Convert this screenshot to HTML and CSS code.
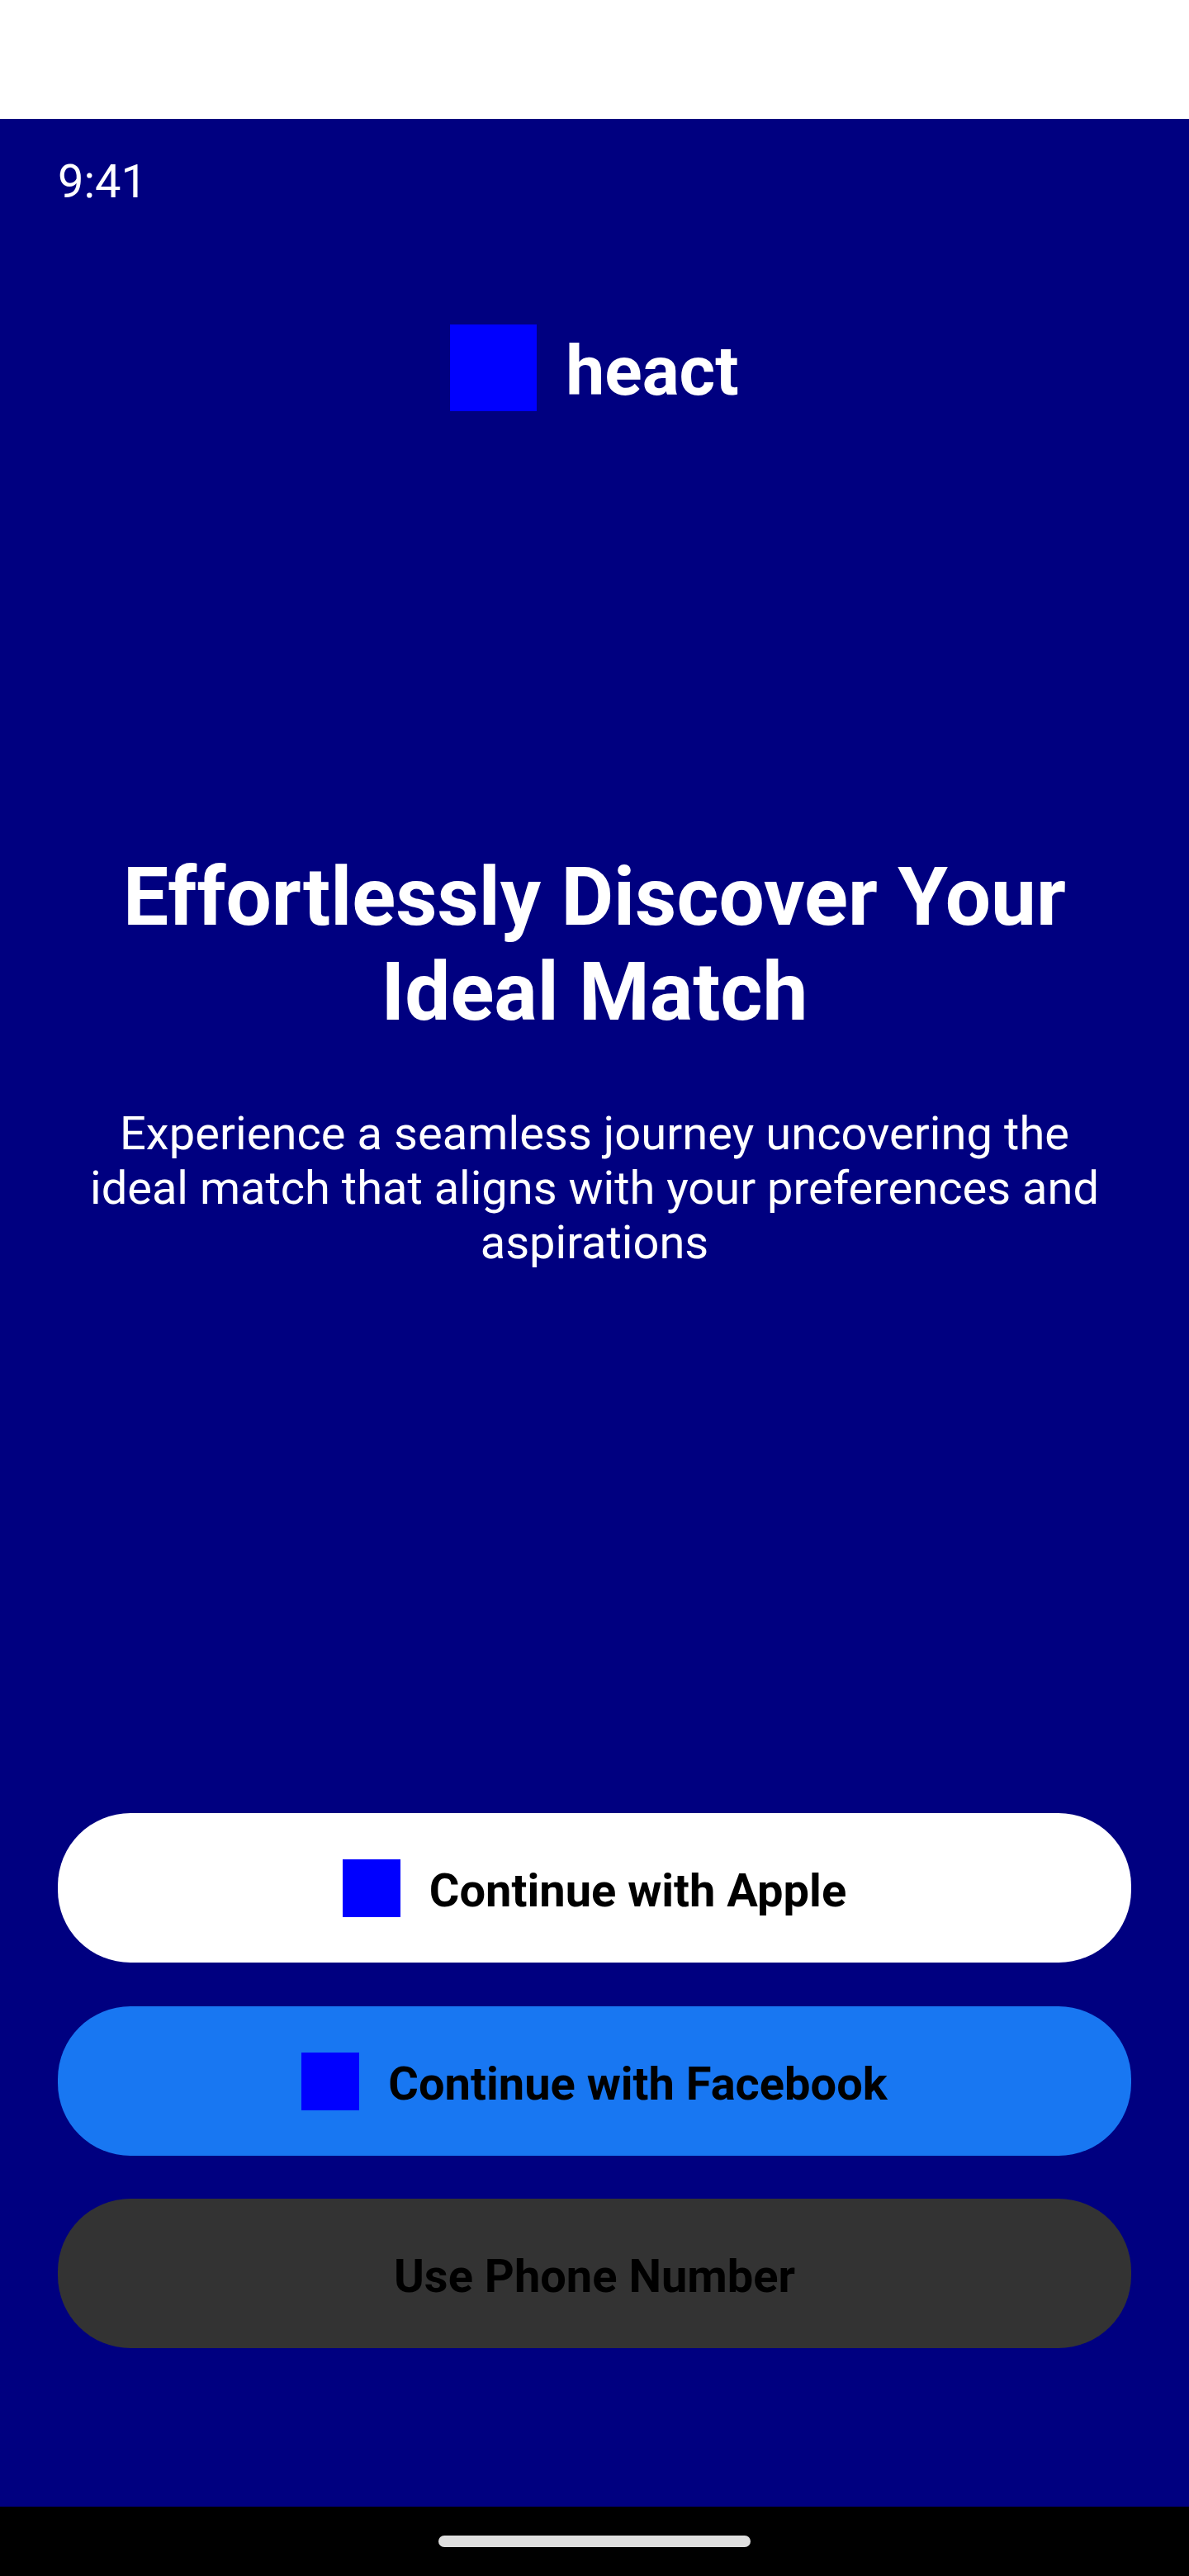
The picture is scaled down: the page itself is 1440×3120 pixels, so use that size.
FILE: index.html
```html
<!DOCTYPE html>
<html lang="en">
<head>
<meta charset="utf-8">
<title>heact</title>
<link rel="stylesheet" href="styles.css">
</head>
<body>
<div class="screen">
<main class="welcome">
<div class="clock">9:41</div>
<div class="brand"><span class="brand-mark"></span><span class="brand-name">heact</span></div>
<section class="intro">
<h1 class="title">Effortlessly Discover Your<br>Ideal Match</h1>
<p class="lead"><span class="lead-first">Experience a seamless journey uncovering the</span><br>ideal match that aligns with your preferences and<br>aspirations</p>
</section>
<div class="actions">
<button class="button apple"><span class="icon"></span><span class="label">Continue with Apple</span></button>
<button class="button facebook"><span class="icon"></span><span class="label">Continue with Facebook</span></button>
<button class="button phone"><span class="label">Use Phone Number</span></button>
</div>
</main>
<footer class="navbar"><span class="handle"></span></footer>
</div>
</body>
</html>
```

FILE: styles.css
```css
* { box-sizing: border-box; }
body { margin: 0; background: #fff; font-family: Roboto, sans-serif; }
.screen { width: 1440px; height: 3120px; padding-top: 144px; display: flex; flex-direction: column; }
.welcome { height: 2892px; background: #000080; color: #fff; padding: 43px 70px 0; }
.clock { height: 66px; font-size: 56px; line-height: 66px; }
.brand { display: flex; justify-content: center; align-items: center; gap: 35px; height: 105px; margin-top: 140px; }
.brand-mark { width: 105px; height: 105px; background: #0000ff; }
.brand-name { font-size: 84px; line-height: 99px; font-weight: 700; padding-top: 8px; }
.intro { margin-top: 531px; text-align: center; }
.title { margin: 0; font-size: 98px; line-height: 115px; font-weight: 700; }
.lead { margin: 81px 0 0; font-size: 56px; line-height: 66px; }
.lead-first { letter-spacing: 0.07px; }
.actions { display: flex; flex-direction: column; gap: 53px; margin-top: 658px; }
.button { height: 181px; width: 100%; border: 0; border-radius: 88px; padding: 0; display: flex; align-items: center; justify-content: center; gap: 35px; font: 700 56px/66px Roboto, sans-serif; color: #000; }
.apple { background: #fff; }
.facebook { background: #1877f2; }
.phone { background: #333; margin-top: -1px; }
.icon { width: 70px; height: 70px; margin-top: 1px; background: #0000ff; }
.label { padding-top: 7px; }
.navbar { height: 84px; background: #000; display: flex; align-items: center; justify-content: center; }
.handle { width: 378px; height: 14px; border-radius: 7px; background: #dfdfdf; }
```
